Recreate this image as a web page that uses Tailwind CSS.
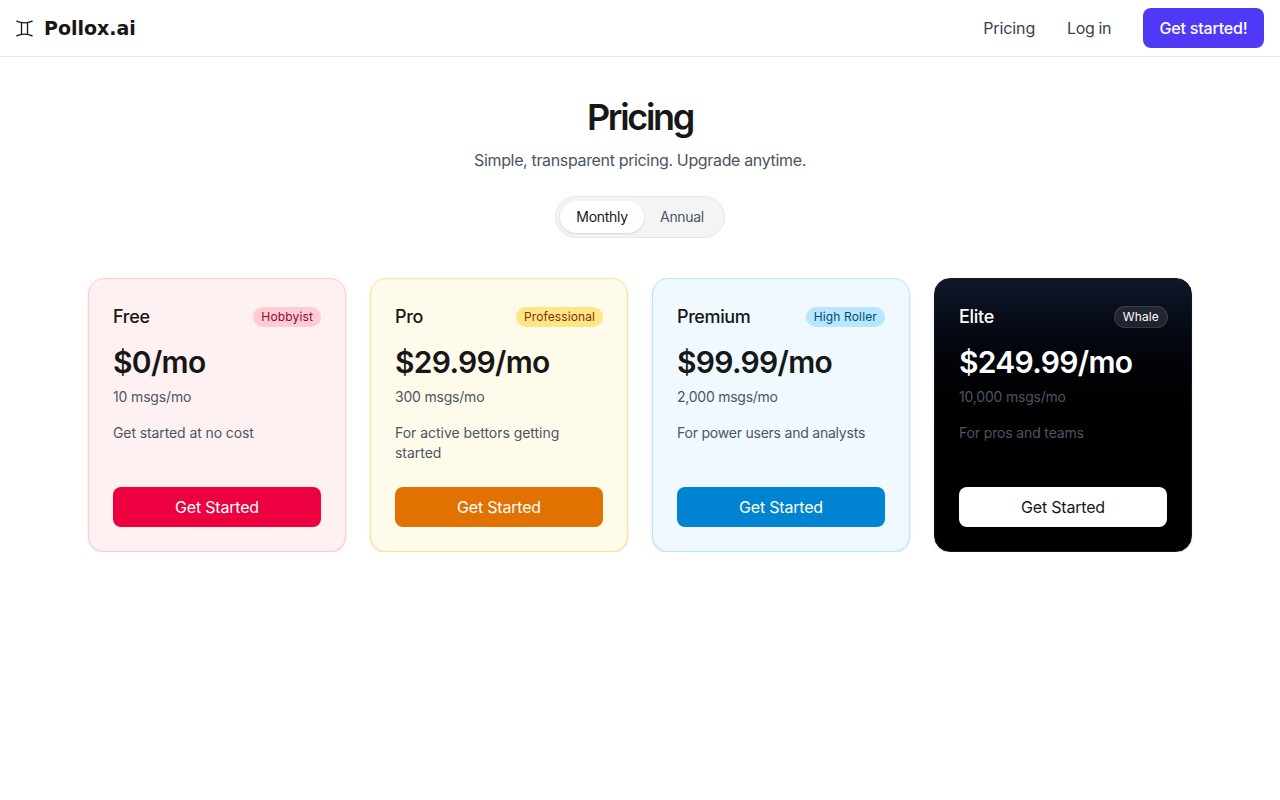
<!doctype html>
<html lang="en">
<head>
<meta charset="utf-8">
<title>Pollox.ai Pricing</title>
<script src="https://cdn.jsdelivr.net/npm/@tailwindcss/browser@4"></script>
</head>
<body class="bg-white font-['Inter',sans-serif] text-[#171717] antialiased">
<header class="h-[57px] border-b border-gray-200 flex items-center justify-between pl-4 pr-4">
  <div class="flex items-center gap-[11px]">
    <svg class="w-[17px] h-[17px]" viewBox="0 0 17 17" fill="none" stroke="#171717" stroke-width="1.3" stroke-linecap="round"><path d="M0.8 1.2C5 3.4 12 3.4 16.2 1.2"/><path d="M0.8 15.8C5 13.6 12 13.6 16.2 15.8"/><path d="M5.5 3V14"/><path d="M11.5 3V14"/></svg>
    <span class="font-['DejaVu_Sans',sans-serif] font-bold text-[19px] leading-none">Pollox.ai</span>
  </div>
  <nav class="flex items-center">
    <a class="text-base tracking-[-0.1px] text-[#374151] px-4">Pricing</a>
    <a class="text-base tracking-[-0.4px] text-[#374151] px-4">Log in</a>
    <a class="ml-4 h-10 w-[121px] flex items-center justify-center rounded-lg bg-indigo-600 text-white text-base tracking-[-0.2px] font-medium">Get started!</a>
  </nav>
</header>
<main class="max-w-[1104px] mx-auto pt-10">
  <div class="flex flex-col items-center">
    <h1 class="text-4xl leading-10 font-semibold tracking-[-2.3px] text-[#171717]">Pricing</h1>
    <p class="mt-[11px] text-base leading-6 tracking-[-0.35px] text-[#4b5563]">Simple, transparent pricing. Upgrade anytime.</p>
    <div class="mt-6 h-[42px] w-[170px] p-1 rounded-full border border-gray-200 bg-gray-100 flex items-center">
      <span class="h-8 w-[84px] rounded-full bg-white shadow-sm flex items-center justify-center text-sm tracking-[-0.3px] text-[#171717]">Monthly</span>
      <span class="h-8 w-[76px] rounded-full flex items-center justify-center text-sm tracking-[-0.3px] text-[#4b5563]">Annual</span>
    </div>
  </div>
  <div class="mt-10 grid grid-cols-4 gap-6">
    <section class="h-[274px] flex flex-col rounded-2xl border border-rose-200 bg-rose-50 p-6 shadow-sm">
      <div class="flex items-center justify-between h-7"><h2 class="text-lg leading-7 tracking-[-0.3px] font-medium">Free</h2><span class="px-2 py-0.5 rounded-full bg-rose-200 text-rose-900 text-xs tracking-[0.15px] leading-4">Hobbyist</span></div>
      <p class="mt-[13px] text-3xl leading-9 tracking-[-0.7px] font-semibold">$0/mo</p>
      <p class="mt-[7px] text-sm leading-5 tracking-[-0.15px] text-[#4b5563]">10 msgs/mo</p>
      <p class="mt-4 text-sm leading-5 tracking-[-0.1px] text-[#4b5563]">Get started at no cost</p>
      <a class="mt-auto h-10 rounded-lg bg-rose-600 text-white flex items-center justify-center text-base tracking-[-0.2px]">Get Started</a>
    </section>
    <section class="h-[274px] flex flex-col rounded-2xl border border-amber-200 bg-amber-50 p-6 shadow-sm">
      <div class="flex items-center justify-between h-7"><h2 class="text-lg leading-7 tracking-[-0.3px] font-medium">Pro</h2><span class="px-2 py-0.5 rounded-full bg-amber-200 text-amber-900 text-xs tracking-[0.1px] leading-4">Professional</span></div>
      <p class="mt-[13px] text-3xl leading-9 tracking-[-0.7px] font-semibold">$29.99/mo</p>
      <p class="mt-[7px] text-sm leading-5 tracking-[-0.2px] text-[#4b5563]">300 msgs/mo</p>
      <p class="mt-4 text-sm leading-5 tracking-[-0.03px] text-[#4b5563]">For active bettors getting started</p>
      <a class="mt-auto h-10 rounded-lg bg-amber-600 text-white flex items-center justify-center text-base tracking-[-0.2px]">Get Started</a>
    </section>
    <section class="h-[274px] flex flex-col rounded-2xl border border-sky-200 bg-sky-50 p-6 shadow-sm">
      <div class="flex items-center justify-between h-7"><h2 class="text-lg leading-7 tracking-[-0.4px] font-medium">Premium</h2><span class="px-2 py-0.5 rounded-full bg-sky-200 text-sky-900 text-xs tracking-[0.15px] leading-4">High Roller</span></div>
      <p class="mt-[13px] text-3xl leading-9 tracking-[-0.7px] font-semibold">$99.99/mo</p>
      <p class="mt-[7px] text-sm leading-5 tracking-[-0.25px] text-[#4b5563]">2,000 msgs/mo</p>
      <p class="mt-4 text-sm leading-5 tracking-[-0.22px] text-[#4b5563]">For power users and analysts</p>
      <a class="mt-auto h-10 rounded-lg bg-sky-600 text-white flex items-center justify-center text-base tracking-[-0.2px]">Get Started</a>
    </section>
    <section class="h-[274px] flex flex-col rounded-2xl border border-gray-900 bg-gradient-to-b from-gray-900 to-black to-60% p-6 shadow-sm text-white">
      <div class="flex items-center justify-between h-7"><h2 class="text-lg leading-7 tracking-[-0.3px] font-medium">Elite</h2><span class="-mr-px px-2 py-0.5 rounded-full border border-white/10 bg-white/10 text-white text-xs tracking-[0.15px] leading-4">Whale</span></div>
      <p class="mt-[13px] text-3xl leading-9 tracking-[-0.7px] font-semibold">$249.99/mo</p>
      <p class="mt-[7px] text-sm leading-5 tracking-[-0.2px] text-[#4b5563]">10,000 msgs/mo</p>
      <p class="mt-4 text-sm leading-5 tracking-[-0.15px] text-[#4b5563]">For pros and teams</p>
      <a class="mt-auto h-10 rounded-lg bg-white text-[#171717] flex items-center justify-center text-base tracking-[-0.2px]">Get Started</a>
    </section>
  </div>
</main>
</body>
</html>
